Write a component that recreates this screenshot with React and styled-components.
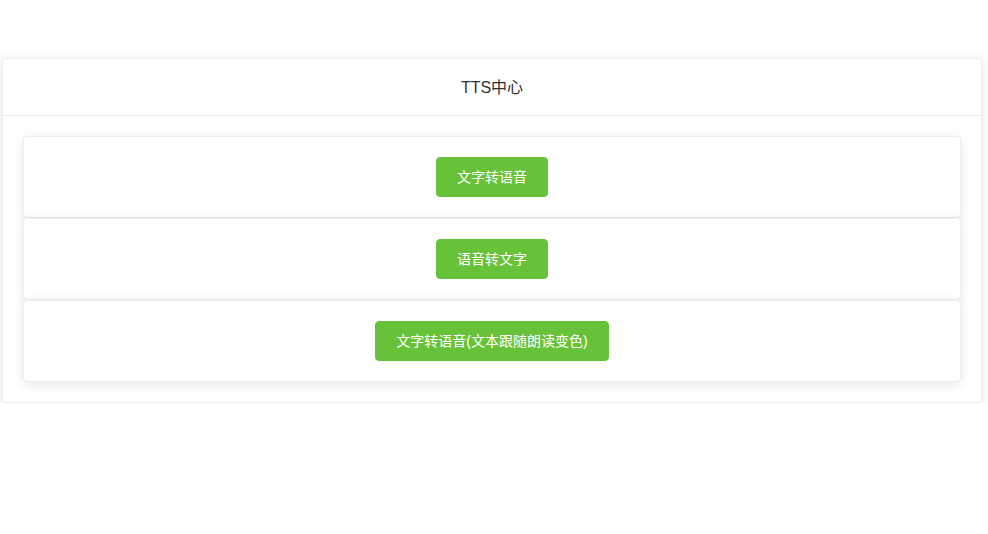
import React from "react";
import styled, { createGlobalStyle } from "styled-components";

const Global = createGlobalStyle`
  html, body { margin: 0; padding: 0; background: #fff; }
  body {
    font-family: "Liberation Sans", Arial, "Noto Sans CJK SC", sans-serif;
    color: #303133;
  }
`;

const Page = styled.div`
  padding: 58px 6px 0 2px;
`;

const Card = styled.div`
  background: #fff;
  border: 1px solid #ebeef5;
  border-radius: 4px;
  box-shadow: 0 2px 12px 0 rgba(0, 0, 0, 0.1);
  overflow: hidden;
`;

const CardHeader = styled.div`
  padding: 19px 20px 17px;
  border-bottom: 1px solid #ebeef5;
  text-align: center;
  font-size: 16px;
  line-height: 20px;
  color: #303133;
`;

const CardBody = styled.div`
  padding: 20px;
`;

const ItemCard = styled.div`
  background: #fff;
  border: 1px solid #ebeef5;
  border-radius: 4px;
  box-shadow: 0 2px 12px 0 rgba(0, 0, 0, 0.1);
  padding: 20px;
  display: flex;
  justify-content: center;
`;

const Button = styled.button`
  font-family: "Liberation Sans", Arial, "Noto Sans CJK SC", sans-serif;
  font-size: 14px;
  line-height: 1;
  padding: 12px 20px;
  border: 1px solid #67c23a;
  background: #67c23a;
  color: #fff;
  border-radius: 4px;
  cursor: pointer;
  white-space: nowrap;
`;

const items = ["文字转语音", "语音转文字", "文字转语音(文本跟随朗读变色)"];

export default function App() {
  return (
    <>
      <Global />
      <Page>
        <Card>
          <CardHeader>TTS中心</CardHeader>
          <CardBody>
            {items.map((t) => (
              <ItemCard key={t}>
                <Button>{t}</Button>
              </ItemCard>
            ))}
          </CardBody>
        </Card>
      </Page>
    </>
  );
}
